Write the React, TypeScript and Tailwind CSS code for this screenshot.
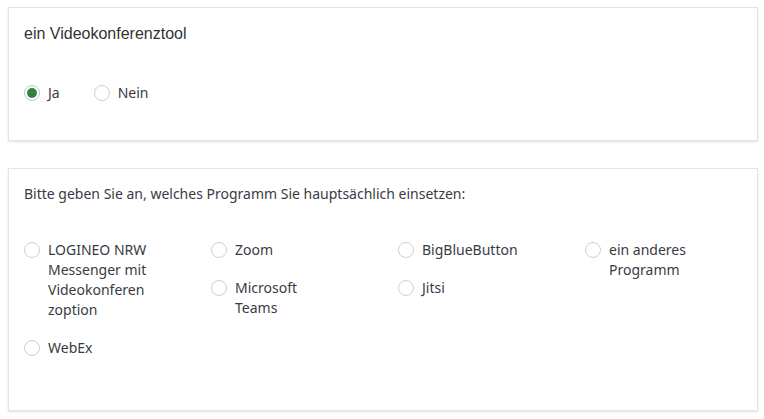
import React from "react";

type Option = { label: string; checked?: boolean };

function Radio({ label, checked, wide }: Option & { wide?: boolean }) {
  return (
    <label className="flex items-start gap-2">
      <span
        className={
          "mt-[2px] flex size-[16px] shrink-0 items-center justify-center rounded-full border bg-white " +
          (checked ? "border-[#c4c4c4]" : "border-[#cfcfcf]")
        }
      >
        {checked && <span className="size-[10px] rounded-full bg-[#2e8540]" />}
      </span>
      <span
        className={
          "text-[14px] leading-[20px] text-[#3a3a45] " +
          (wide ? "" : "w-[102px] break-words")
        }
      >
        {label}
      </span>
    </label>
  );
}

const columns: Option[][] = [
  [{ label: "LOGINEO NRW Messenger mit Videokonferenzoption" }, { label: "WebEx" }],
  [{ label: "Zoom" }, { label: "Microsoft Teams" }],
  [{ label: "BigBlueButton" }, { label: "Jitsi" }],
  [{ label: "ein anderes Programm" }],
];

export default function App() {
  return (
    <div
      className="flex min-h-[419px] flex-col gap-[27px] bg-white px-2 pt-[7px]"
      style={{ fontFamily: "'Noto Sans', 'Open Sans', sans-serif" }}
    >
      <div className="h-[134px] w-[750px] border border-[#e4e4e4] bg-white pl-[15px] pr-4 pt-[16px] shadow-[0_1px_2px_rgba(0,0,0,0.12)]">
        <p
          className="text-[16px] leading-[20px] text-[#333]"
          style={{ fontFamily: "'Liberation Sans', Arial, sans-serif" }}
        >
          ein Videokonferenztool
        </p>
        <div className="mt-[39px] flex gap-[34px]">
          <Radio label="Ja" checked wide />
          <Radio label="Nein" wide />
        </div>
      </div>

      <div className="h-[243px] w-[750px] overflow-hidden border border-[#e4e4e4] bg-white pl-[15px] pr-4 pt-[15px] shadow-[0_1px_2px_rgba(0,0,0,0.12)]">
        <p className="text-[14px] leading-[20px] text-[#3a3a45]">
          Bitte geben Sie an, welches Programm Sie hauptsächlich einsetzen:
        </p>
        <div className="mt-[36px] flex">
          {columns.map((col, i) => (
            <div key={i} className="flex w-[187px] shrink-0 flex-col gap-[18px]">
              {col.map((o) => (
                <Radio key={o.label} {...o} />
              ))}
            </div>
          ))}
        </div>
      </div>
    </div>
  );
}
